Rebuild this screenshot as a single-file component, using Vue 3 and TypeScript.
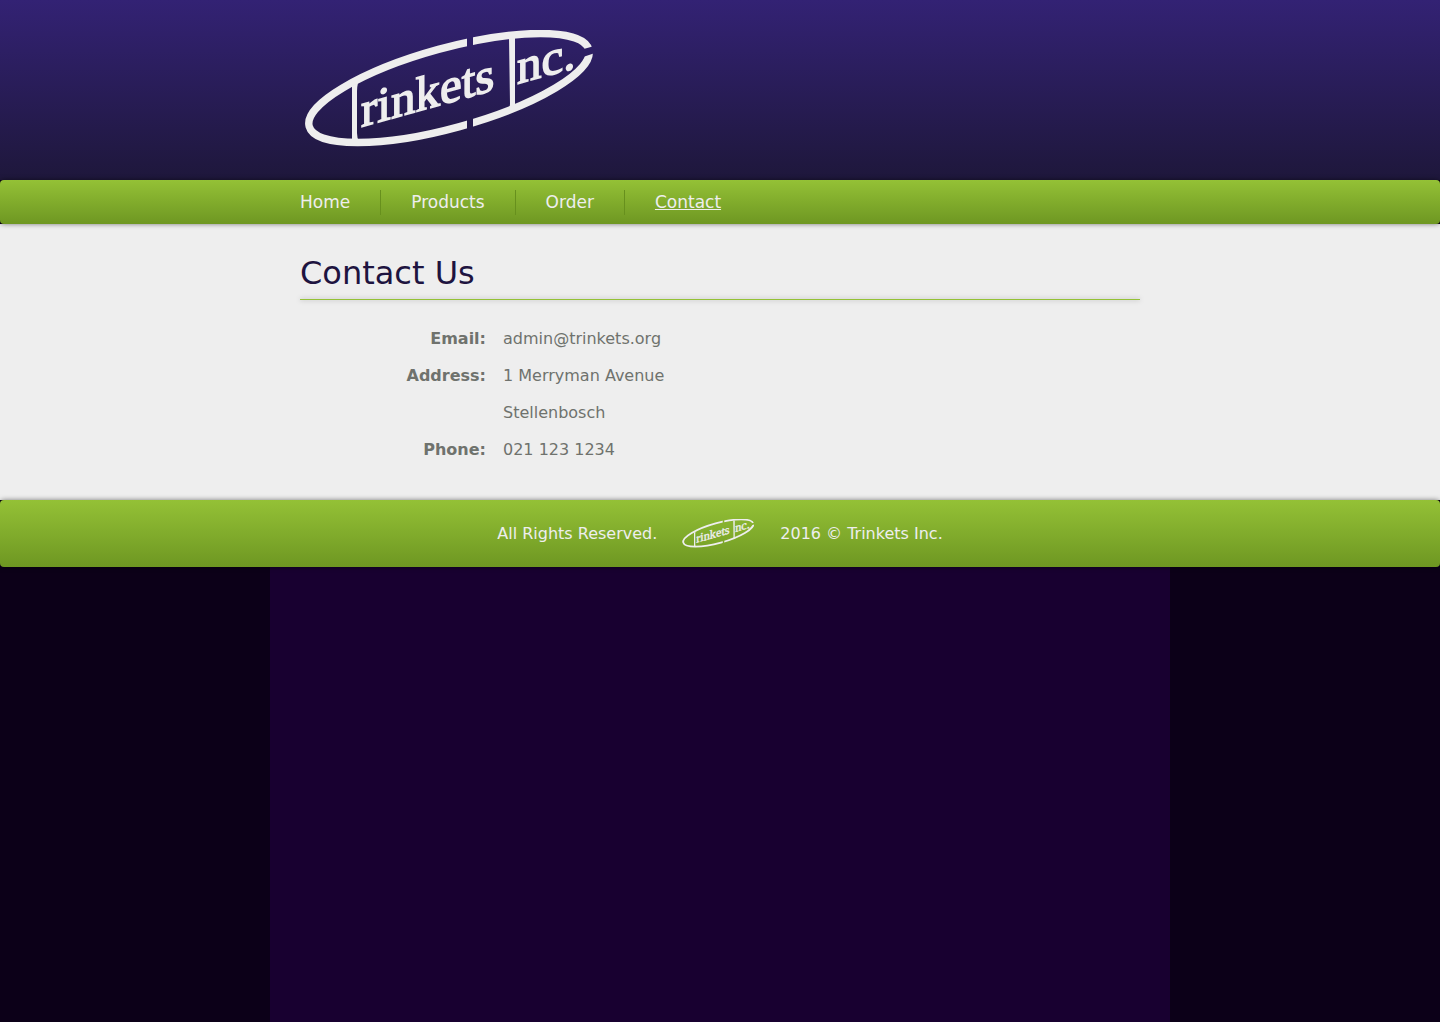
<script setup lang="ts">
interface NavLink {
  label: string
  href: string
  current: boolean
}

interface ContactEntry {
  term: string
  lines: string[]
}

const links: NavLink[] = [
  { label: 'Home', href: '#home', current: false },
  { label: 'Products', href: '#products', current: false },
  { label: 'Order', href: '#order', current: false },
  { label: 'Contact', href: '#contact', current: true },
]

const contacts: ContactEntry[] = [
  { term: 'Email:', lines: ['admin@trinkets.org'] },
  { term: 'Address:', lines: ['1 Merryman Avenue', 'Stellenbosch'] },
  { term: 'Phone:', lines: ['021 123 1234'] },
]
</script>

<template>
  <div class="page">
    <header class="header">
      <div class="container">
        <svg class="logo" viewBox="0 0 300 120" role="img" aria-label="Trinkets Inc.">
          <defs>
            <mask id="ring-gaps" maskUnits="userSpaceOnUse" x="0" y="0" width="300" height="120">
              <rect width="300" height="120" fill="#fff" />
              <rect x="167" width="6" height="120" fill="#000" />
              <path d="M280 20 L298 15 L298 22 L280 28 Z" fill="#000" />
            </mask>
            <g id="trinkets-logo">
              <g mask="url(#ring-gaps)">
                <ellipse cx="149" cy="58" rx="145" ry="40" transform="rotate(-15.4 149 58)" fill="none" stroke="#eee" stroke-width="7.4" />
              </g>
              <path d="M52 56 L58 53 Q57 57 57 61 L57 103 Q57 108 59 111 L52 111 Z" fill="#eee" />
              <path d="M209 8 L215 8 L215 74 Q215 77 217 79 L208 81 Q210 78 210 74 Z" fill="#eee" />
              <text class="wordmark" transform="translate(61 97) skewY(-15.5)">rinkets</text>
              <text class="wordmark" transform="translate(217 54) skewY(-15.5)">nc.</text>
            </g>
          </defs>
          <use href="#trinkets-logo" />
        </svg>
      </div>
    </header>

    <nav class="nav" aria-label="Main">
      <ul class="container nav-list">
        <li v-for="link in links" :key="link.label" class="nav-item">
          <a class="nav-link" :class="{ current: link.current }" :href="link.href" :aria-current="link.current ? 'page' : undefined">{{ link.label }}</a>
        </li>
      </ul>
    </nav>

    <main class="main">
      <div class="container">
        <h1 class="title">Contact Us</h1>
        <hr class="rule">
        <dl class="details">
          <template v-for="entry in contacts" :key="entry.term">
            <dt>{{ entry.term }}</dt>
            <dd v-for="line in entry.lines" :key="line">{{ line }}</dd>
          </template>
        </dl>
      </div>
    </main>

    <footer class="footer">
      <span>All Rights Reserved.</span>
      <svg class="footer-logo" viewBox="0 0 300 120" aria-hidden="true">
        <use href="#trinkets-logo" />
      </svg>
      <span>2016 © Trinkets Inc.</span>
    </footer>
  </div>
</template>

<style>
html {
  background: #0c0018;
}

body {
  margin: 0;
}
</style>

<style scoped>
.page {
  min-height: 100vh;
  background: linear-gradient(#180030, #180030) center / 900px 100% no-repeat;
  color: #6f726d;
  font-family: "DejaVu Sans", Verdana, sans-serif;
  font-size: 16px;
  line-height: 19px;
  text-rendering: optimizeSpeed;
}

.container {
  box-sizing: border-box;
  max-width: 900px;
  margin: 0 auto;
  padding: 0 30px;
}

.header {
  padding: 30px 0;
  background: linear-gradient(#332274, #1e173b);
}

.logo {
  display: block;
  width: 300px;
  height: 120px;
}

.wordmark {
  fill: #eee;
  stroke: #eee;
  stroke-width: 1.5px;
  font-family: "Liberation Serif", "Times New Roman", serif;
  font-size: 49px;
}

.nav,
.footer {
  position: relative;
  border-radius: 4px;
  background: linear-gradient(#94c136, #6e9722);
  box-shadow: 0 0 5px rgba(0, 0, 0, 0.5);
  color: #eee;
}

.nav {
  padding: 10px 0 9px;
}

.nav-list {
  display: flex;
  list-style: none;
}

.nav-item {
  padding: 2px 30px 3px;
  border-right: 1px solid #67901d;
  font-size: 17px;
  line-height: 20px;
}

.nav-item:first-child {
  padding-left: 0;
}

.nav-item:last-child {
  border-right: 0;
}

.nav-link {
  color: inherit;
  text-decoration: none;
}

.nav-link.current {
  text-decoration: underline;
}

.main {
  padding: 30px 0 41px;
  background: #eee;
}

.title {
  margin: 0;
  color: #1e1440;
  font-size: 32px;
  font-weight: 400;
  line-height: 38px;
}

.rule {
  height: 1px;
  margin: 7px 0 29px;
  border: 0;
  background: #94c136;
  box-shadow: 0 0 5px rgba(0, 0, 0, 0.4);
}

.details {
  display: grid;
  grid-template-columns: 186px 1fr;
  gap: 18px 17px;
  margin: 0;
}

.details dt {
  grid-column: 1;
  font-weight: 700;
  text-align: right;
}

.details dd {
  grid-column: 2;
  margin: 0;
}

.footer {
  display: flex;
  align-items: center;
  justify-content: center;
  gap: 24px;
  padding: 18px 0;
}

.footer-logo {
  width: 75px;
  height: 31px;
}
</style>
